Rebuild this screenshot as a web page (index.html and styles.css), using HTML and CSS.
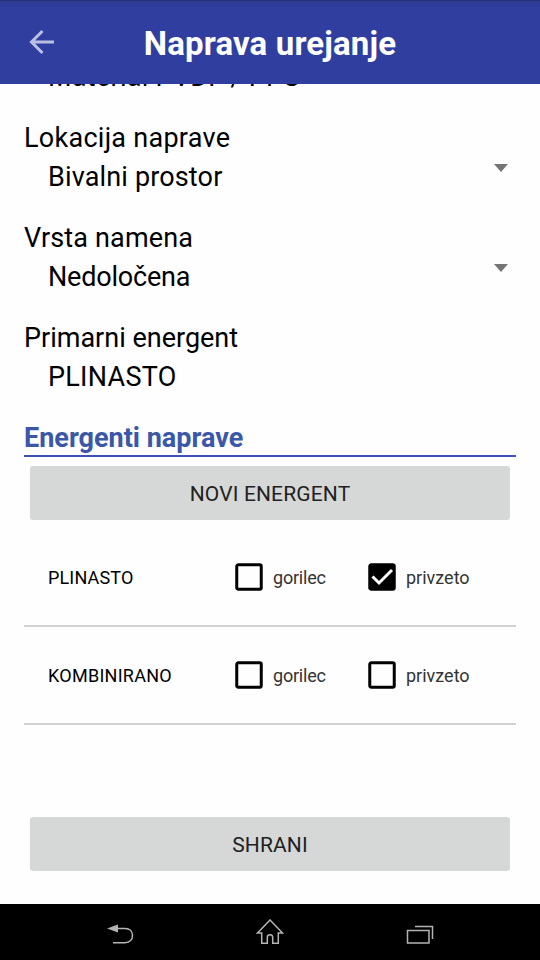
FILE: index.html
```html
<!DOCTYPE html>
<html lang="sl">

<head>
    <meta charset="utf-8">
    <title>Naprava urejanje</title>
    <link rel="stylesheet" href="styles.css">
</head>

<body>
    <header class="header">
        <svg class="back" width="26" height="26" viewBox="0 0 26 26">
            <path d="M25 13H3M13.5 2L2.5 13l11 11"/>
        </svg>
        <h1>Naprava urejanje</h1>
    </header>

    <main class="content">
        <div class="field first">
            <div class="value wide">Material PVDF / PPS</div>
        </div>
        <div class="field">
            <div class="label wide">Lokacija naprave</div>
            <div class="value loose">Bivalni prostor
                <svg class="arrow" width="14" height="8" viewBox="0 0 14 8"><path d="M0 0h14L7 8z"/></svg>
            </div>
        </div>
        <div class="field">
            <div class="label loose">Vrsta namena</div>
            <div class="value tight">Nedoločena
                <svg class="arrow" width="14" height="8" viewBox="0 0 14 8"><path d="M0 0h14L7 8z"/></svg>
            </div>
        </div>
        <div class="field">
            <div class="label">Primarni energent</div>
            <div class="value wide">PLINASTO</div>
        </div>

        <h2>Energenti naprave</h2>
        <button class="button" type="button">NOVI ENERGENT</button>

        <div class="row">
            <div class="name loose">PLINASTO</div>
            <div class="check tight">
                <svg width="28" height="28" viewBox="0 0 28 28"><rect class="box" x="1.75" y="1.75" width="24.5" height="24.5" rx="1.5"/></svg>
                gorilec
            </div>
            <div class="check">
                <svg width="28" height="28" viewBox="0 0 28 28"><rect class="box checked" x="1.75" y="1.75" width="24.5" height="24.5" rx="1.5"/><path class="tick" d="M4.5 13.5l6.5 6.5L24 7"/></svg>
                privzeto
            </div>
        </div>
        <div class="row">
            <div class="name wide">KOMBINIRANO</div>
            <div class="check tight">
                <svg width="28" height="28" viewBox="0 0 28 28"><rect class="box" x="1.75" y="1.75" width="24.5" height="24.5" rx="1.5"/></svg>
                gorilec
            </div>
            <div class="check">
                <svg width="28" height="28" viewBox="0 0 28 28"><rect class="box" x="1.75" y="1.75" width="24.5" height="24.5" rx="1.5"/></svg>
                privzeto
            </div>
        </div>

        <button class="button save" type="button">SHRANI</button>
    </main>

    <nav class="navbar">
        <svg width="30" height="30" viewBox="0 0 30 30">
            <path class="solid" d="M2 9.5L13 5.500v8z"/>
            <path d="M12 9.500h8c5 0 7.500 3.200 7.500 7s-2.500 7.200-7.500 7.200H8"/>
        </svg>
        <svg width="30" height="30" viewBox="0 0 30 30">
            <path d="M15 1L2.500 14h4.200v10.200h5.600V18.500a2.700 2.700 0 0 1 5.400 0v5.700h5.600V14h4.200z"/>
        </svg>
        <svg width="30" height="30" viewBox="0 0 30 30">
            <path d="M2.500 11.500h21.500v12.500h-21.500zM10 7.500h17.500V20"/>
        </svg>
    </nav>
</body>
</html>
```

FILE: styles.css
```css
body {
    margin: 0;
    width: 540px;
    height: 960px;
    display: flex;
    flex-direction: column;
    overflow: hidden;
    background: #fefefe;
    color: #000;
    font: 27px/39px Roboto, sans-serif;
}

svg {
    display: block;
    flex: none;
}

.wide {
    letter-spacing: 0.27px;
}

.loose {
    letter-spacing: 0.15px;
}

.tight {
    letter-spacing: -0.2px;
}

.header {
    box-sizing: border-box;
    flex: none;
    display: grid;
    grid-template-columns: 56px 1fr 56px;
    align-items: center;
    height: 84px;
    background: linear-gradient(#202c70 0, #2c3988 1px, #2f3c96 3px, #303e9f 10px);
    color: #fff;
}

.back {
    margin-left: 29px;
    fill: none;
    stroke: #bcc1e3;
    stroke-width: 3;
}

h1 {
    margin: 3px 0 0;
    text-align: center;
    font-size: 33px;
    font-weight: bold;
    letter-spacing: 0.15px;
}

.content {
    flex: 1;
    min-height: 0;
    overflow: hidden;
    padding: 0 24px;
}

.field {
    height: 78px;
    margin-bottom: 22px;
}

.first {
    height: 39px;
    margin-top: -26px;
}

.value {
    display: flex;
    align-items: center;
    justify-content: space-between;
    height: 39px;
    padding: 0 8px 0 24px;
}

.arrow {
    margin-bottom: 20px;
    fill: #757575;
}

h2 {
    margin: 0;
    height: 36px;
    border-bottom: 2px solid #3f51b5;
    color: #3a57a8;
    font-size: 27px;
    font-weight: bold;
}

.button {
    display: block;
    box-sizing: border-box;
    width: 480px;
    height: 54px;
    margin: 9px 6px;
    padding: 1px 0 0;
    border: 0;
    border-radius: 3px;
    background: #d6d8d7;
    color: #212121;
    font: 21px/24px Roboto, sans-serif;
    letter-spacing: 0.15px;
}

.row {
    box-sizing: border-box;
    display: grid;
    grid-template-columns: 187px 133px 1fr;
    align-items: center;
    height: 98px;
    padding-left: 24px;
    border-bottom: 2px solid #d2d2d2;
    font-size: 18px;
}

.check {
    display: flex;
    align-items: center;
    gap: 10px;
    color: #333;
}

.box {
    fill: none;
    stroke: #000;
    stroke-width: 3;
}

.checked {
    fill: #000;
}

.tick {
    fill: none;
    stroke: #fff;
    stroke-width: 3;
}

.save {
    margin-top: 92px;
}

.navbar {
    flex: none;
    display: flex;
    justify-content: center;
    gap: 120px;
    box-sizing: border-box;
    height: 56px;
    padding-top: 15px;
    background: #000;
}

.navbar svg {
    fill: none;
    stroke: #b4b4b4;
    stroke-width: 1.5;
}

.navbar .solid {
    fill: #b4b4b4;
    stroke: none;
}
```
